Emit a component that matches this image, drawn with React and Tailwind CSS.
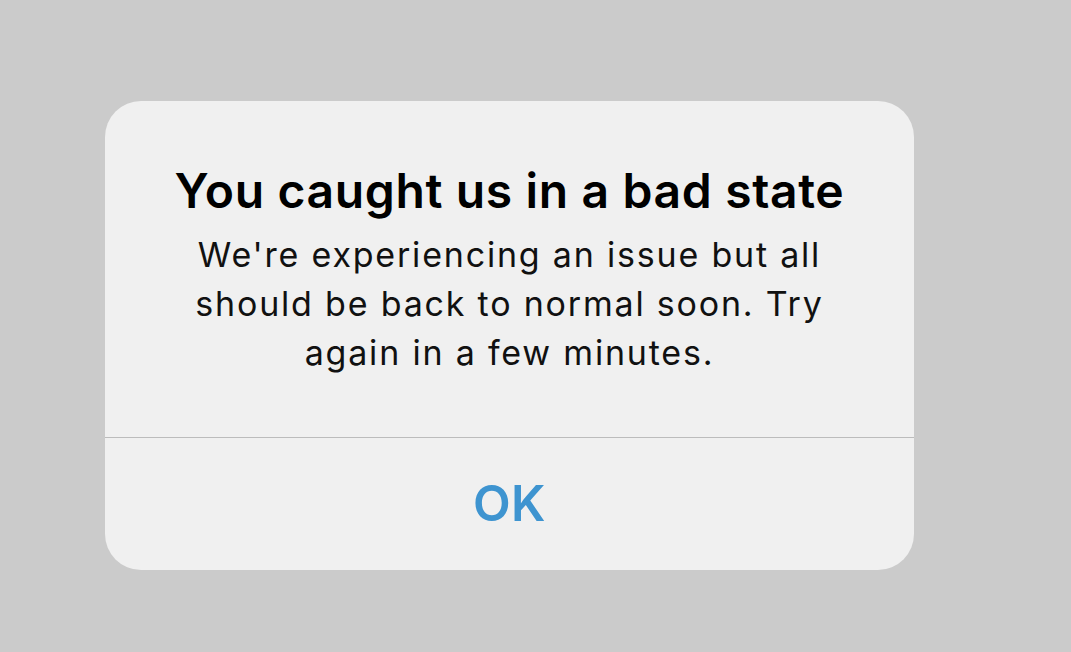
export default function App() {
  return (
    <div className="w-[1071px] h-[652px] bg-[#cbcbcb] pl-[105px] pt-[101px]" style={{ fontFamily: 'Inter, "Noto Sans", sans-serif' }}>
      <div className="w-[809px] h-[469px] bg-[#f0f0f0] rounded-[36px] flex flex-col overflow-hidden">
        <div className="h-[336px] flex flex-col items-center pt-[60px]">
          <h1 className="text-[48px] leading-[60px] font-semibold text-black tracking-[0.65px] whitespace-nowrap">You caught us in a bad state</h1>
          <p className="mt-[9px] text-[34px] leading-[49px] text-[#111] text-center tracking-[1.8px] whitespace-nowrap">
            We're experiencing an issue but all<br />should be back to normal soon. Try<br />again in a few minutes.
          </p>
        </div>
        <div className="h-px bg-[#bcbcbc]" />
        <div className="flex-1 flex items-center justify-center">
          <span className="text-[49px] font-semibold text-[#3e94d0] tracking-[0.5px]">OK</span>
        </div>
      </div>
    </div>
  );
}
